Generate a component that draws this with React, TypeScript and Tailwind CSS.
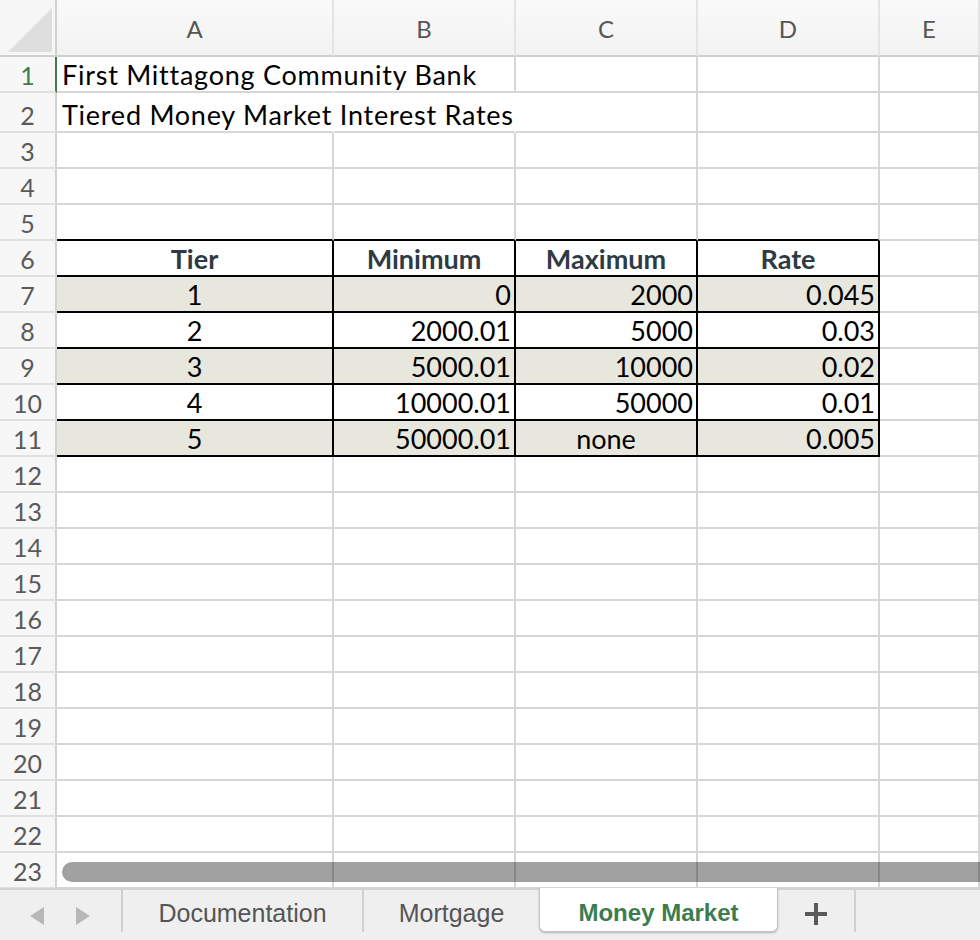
import React from "react";

type Cell = { text?: string; align?: "left" | "center" | "right"; bold?: boolean };

const COLS = ["A", "B", "C", "D", "E"];
const colW = ["w-[277px]", "w-[182px]", "w-[182px]", "w-[182px]", "flex-1"];

const tableData: string[][] = [
  ["1", "0", "2000", "0.045"],
  ["2", "2000.01", "5000", "0.03"],
  ["3", "5000.01", "10000", "0.02"],
  ["4", "10000.01", "50000", "0.01"],
  ["5", "50000.01", "none", "0.005"],
];

function rowCells(r: number): Cell[] {
  if (r === 1) return [{ text: "First Mittagong Community Bank", align: "left" }];
  if (r === 2) return [{ text: "Tiered Money Market Interest Rates", align: "left" }];
  if (r === 6)
    return [
      { text: "Tier", align: "center", bold: true },
      { text: "Minimum", align: "center", bold: true },
      { text: "Maximum", align: "center", bold: true },
      { text: "Rate", align: "center", bold: true },
    ];
  if (r >= 7 && r <= 11) {
    const d = tableData[r - 7];
    return [
      { text: d[0], align: "center" },
      { text: d[1], align: "right" },
      { text: d[2], align: d[2] === "none" ? "center" : "right" },
      { text: d[3], align: "right" },
    ];
  }
  return [];
}

function Row({ r }: { r: number }) {
  const h = r === 2 ? "h-[40px]" : "h-[36px]";
  const cells = rowCells(r);
  const inTable = r >= 6 && r <= 11;
  const shaded = r === 7 || r === 9 || r === 11;
  return (
    <div className={`flex ${h}`}>
      <div
        className={`w-[57px] shrink-0 border-b-2 border-b-[#e0e0e0] border-r-2 ${
          r === 1 ? "border-r-[#3c7d50] text-[#3c7d50]" : "border-r-[#d2d2d2] text-[#5a5a5a]"
        } bg-[#f7f7f7] flex items-end justify-center text-[25px] leading-[32px]`}
      >
        {r}
      </div>
      {COLS.map((c, i) => {
        const cell = cells[i];
        const inT = inTable && i < 4;
        const hideRight = (r === 1 && i === 0) || (r === 2 && i <= 1);
        let border = hideRight
          ? "border-b-2 border-[#d6d6d6] border-r-2 border-r-transparent"
          : "border-r-2 border-b-2 border-[#d6d6d6]";
        if (inT) border = "border-r-2 border-b-2 border-black";
        else if (r === 5 && i < 4) border = "border-r-2 border-r-[#d6d6d6] border-b-2 border-b-black";
        const bg = inT && shaded ? "bg-[#e8e7de]" : "";
        const overflow = r === 1 || r === 2;
        const just =
          cell?.align === "center" ? "justify-center" : cell?.align === "right" ? "justify-end" : "justify-start";
        const pad = cell?.align === "right" ? "pr-[3px]" : "";
        return (
          <div
            key={c}
            className={`${colW[i]} shrink-0 ${border} ${bg} relative flex items-end ${just} ${pad} ${
              overflow ? "" : "overflow-hidden"
            } text-[27px] leading-[32px] ${cell?.bold ? "font-bold text-[#2e3b44]" : "text-black"}`}
          >
            {overflow && cell?.text ? (
              <span className="absolute left-[5px] bottom-0 whitespace-nowrap tracking-[0.75px]">{cell.text}</span>
            ) : (
              cell?.text
            )}
          </div>
        );
      })}
    </div>
  );
}

export default function App() {
  const rows = Array.from({ length: 23 }, (_, i) => i + 1);
  return (
    <div className="w-[980px] h-[940px] overflow-hidden bg-white flex flex-col font-['Lato',sans-serif] relative">
      <div className="relative h-[888px] overflow-hidden shrink-0 bg-white">
        {/* column header */}
        <div className="flex h-[57px]">
          <div className="w-[57px] shrink-0 border-r-2 border-b-2 border-[#d0d0d0] bg-[#f6f6f6] relative">
            <svg width="55" height="55" className="absolute left-0 top-0">
              <polygon points="8,52 52,52 52,8" fill="#dedede" />
            </svg>
          </div>
          {COLS.map((c, i) => (
            <div
              key={c}
              className={`${colW[i]} shrink-0 border-r-2 border-r-[#e4e4e4] border-b-2 border-b-[#d0d0d0] bg-gradient-to-b from-[#fafafa] to-[#f2f2f2] flex items-center justify-center pt-[2px] text-[24px] text-[#565656]`}
            >
              {c}
            </div>
          ))}
        </div>
        {rows.map((r) => (
          <Row key={r} r={r} />
        ))}
        {/* horizontal scrollbar */}
        <div className="absolute left-[62px] right-[-20px] top-[862px] h-[20px] rounded-full bg-black/[0.37] z-20" />
      </div>
      {/* sheet tabs */}
      <div className="flex-1 bg-[#efefef] border-t-2 border-[#d2d2d2] flex items-start font-['Liberation_Sans',sans-serif] text-[25px] text-[#555]">
        <div className="w-[121px] h-[42px] shrink-0">
          <svg width="121" height="42">
            <polygon points="30,26 44,17 44,35" fill="#b8b8b8" />
            <polygon points="90,26 76,17 76,35" fill="#b8b8b8" />
          </svg>
        </div>
        <div className="w-[2px] h-[42px] bg-[#d0d0d0] shrink-0" />
        <div className="w-[239px] h-[42px] pt-[5px] flex items-center justify-center shrink-0">Documentation</div>
        <div className="w-[2px] h-[42px] bg-[#d0d0d0] shrink-0" />
        <div className="w-[175px] h-[42px] pt-[5px] flex items-center justify-center shrink-0">Mortgage</div>
        <div className="w-[239px] h-[44px] mt-[-2px] pt-[7px] bg-white border-x border-b border-[#c4c4c4] rounded-b-[6px] shadow-[0_1px_2px_rgba(0,0,0,0.25)] flex items-center justify-center font-bold text-[24px] text-[#3c7d50] shrink-0">
          Money Market
        </div>
        <div className="w-[76px] h-[42px] pt-[5px] flex items-center justify-center shrink-0">
          <svg width="22" height="22" viewBox="0 0 22 22">
            <rect x="0" y="9" width="22" height="4" fill="#5a5a5a" />
            <rect x="9" y="0" width="4" height="22" fill="#5a5a5a" />
          </svg>
        </div>
        <div className="w-[2px] h-[42px] bg-[#d0d0d0] shrink-0" />
      </div>
    </div>
  );
}
